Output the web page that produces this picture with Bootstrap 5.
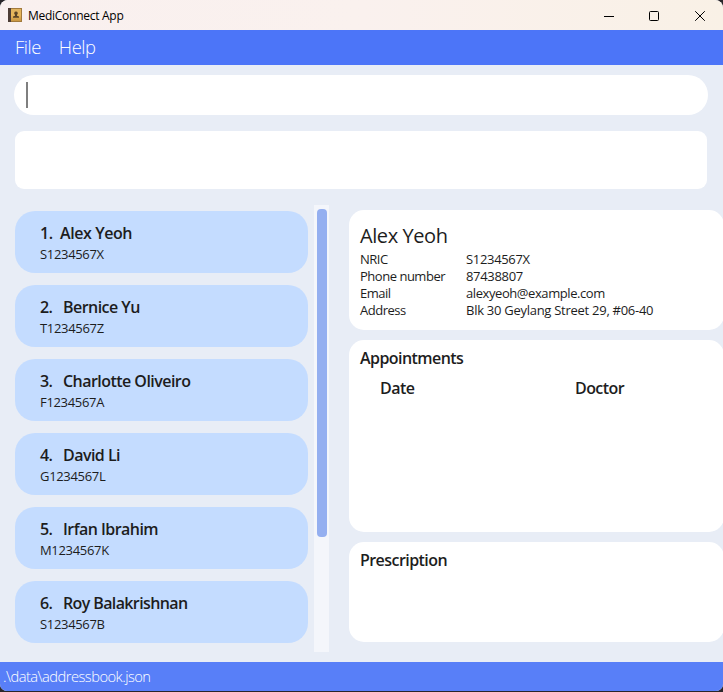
<!DOCTYPE html>
<html lang="en">
<head>
<meta charset="utf-8">
<meta name="viewport" content="width=device-width, initial-scale=1">
<title>MediConnect App</title>
<link href="https://cdn.jsdelivr.net/npm/bootstrap@5.3.0/dist/css/bootstrap.min.css" rel="stylesheet">
<style>
html,body{height:100%;overflow:hidden}
body{background:#29262a;font-family:"Open Sans","Noto Sans",sans-serif;color:#1d1d1d;font-size:13px;line-height:17px}
.window{height:691px;background:#e8edf6;border-radius:8px 8px 7px 7px}
.title-bar{height:30px;background:linear-gradient(90deg,#f9f0ef,#faf1ee 50%,#f9f1e6);color:#000;font-size:12px;padding-left:8px}
.title-text{margin-left:6px;letter-spacing:-.27px}
.win-btn{width:46px}
.win-btn:first-child{width:44px}
.menu-bar{height:35px;background:#4c75f8;color:#fff;font-weight:300;font-size:18.4px;padding:0 0 2px 15px;gap:18px}
.menu-bar span{letter-spacing:-.45px}
.command-box{height:40px;margin:10px 15px 0 14px;border-radius:20px;padding-left:12px}
.caret{width:2px;height:26px;background:#7f7f7f}
.result-box{height:58px;margin:16px 16px 0 15px;border-radius:9px}
.main-area{height:473px;padding-top:16px}
.person-list{width:314px;padding:6px 6px 0 15px;gap:12px}
.person{height:62px;flex:none;background:#c4dcff;border-radius:20px;padding:11px 0 0 25px}
.person-name{font-size:16px;line-height:22px;font-weight:600;letter-spacing:-.54px}
.person-name .num{width:23px}
.person:first-child .num{width:20px}
.person:first-child .person-name{letter-spacing:-.42px}
.person:last-child .person-name{letter-spacing:-.62px}
.person-id{margin-top:2px;letter-spacing:-.32px}
.track{width:15px;height:447px;background:#f4f6fb;padding:4px 2px 0 3px}
.thumb{height:328px;background:#94aff0;border-radius:4px}
.details{width:375px;margin-left:20px;padding-top:5px;gap:10px}
.panel{background:#fff;border-radius:15px;padding:0 11px}
.panel-person{height:120px;padding-top:11px}
.panel-appt{height:192px;padding-top:7px}
.panel-rx{height:100px;padding-top:7px}
.full-name{font-size:20px;line-height:29px;margin-bottom:1px;letter-spacing:-.42px}
.fields{display:grid;grid-template-columns:106px 1fr}
.fields span:nth-child(odd){letter-spacing:-.48px}
.fields span:nth-child(even){letter-spacing:-.32px}
.fields .field-email{letter-spacing:-.42px!important}
.fields .field-address{letter-spacing:-.27px!important}
.heading{font-size:16px;line-height:22px;font-weight:600;letter-spacing:-.56px}
.appt-head{display:grid;grid-template-columns:195px 1fr;padding-left:20px;margin-top:8px}
.status-bar{height:29px;background:#587ff8;color:#fff;font-weight:300;font-size:14.7px;letter-spacing:-.52px;padding-left:3px}
</style>
</head>
<body>
<div class="window d-flex flex-column overflow-hidden">
  <header class="title-bar d-flex align-items-center flex-shrink-0">
    <svg width="14" height="14" viewBox="0 0 14 14"><defs><linearGradient id="g" x2="0" y2="1"><stop stop-color="#dfb25e"/><stop offset=".5" stop-color="#e9b85c"/><stop offset="1" stop-color="#c99743"/></linearGradient></defs><path fill="#a27a3c" d="M0 0h14v14H0z"/><path fill="#4d3d36" d="M0 0h3v14H0z"/><path fill="url(#g)" d="M3 1h10v12H3z"/><path fill="#5a4326" d="M8 3.4a1.8 1.8 0 0 1 1 3.300v1.100l2 .8v1.200H5V8.600l2-.8V6.700a1.800 1.800 0 0 1 1-3.300z"/></svg>
    <span class="title-text">MediConnect App</span>
    <div class="d-flex ms-auto">
      <span class="win-btn text-center"><svg width="10" height="10" viewBox="0 0 10 10"><path d="M0 5.500h10" stroke="#000"/></svg></span>
      <span class="win-btn text-center"><svg width="10" height="10" viewBox="0 0 10 10"><rect x=".5" y=".5" width="9" height="9" rx="1" fill="none" stroke="#000"/></svg></span>
      <span class="win-btn text-center"><svg width="10" height="10" viewBox="0 0 10 10"><path d="M.2.2l9.600 9.600M9.800.2L.2 9.800" stroke="#000"/></svg></span>
    </div>
  </header>
  <nav class="menu-bar d-flex align-items-center flex-shrink-0"><span>File</span><span>Help</span></nav>
  <div class="command-box bg-white d-flex align-items-center flex-shrink-0"><div class="caret"></div></div>
  <div class="result-box bg-white flex-shrink-0"></div>
  <main class="main-area d-flex align-items-start flex-shrink-0">
    <div class="person-list d-flex flex-column flex-shrink-0">
      <div class="person"><div class="person-name d-flex"><span class="num">1.</span><span>Alex Yeoh</span></div><div class="person-id">S1234567X</div></div>
      <div class="person"><div class="person-name d-flex"><span class="num">2.</span><span>Bernice Yu</span></div><div class="person-id">T1234567Z</div></div>
      <div class="person"><div class="person-name d-flex"><span class="num">3.</span><span>Charlotte Oliveiro</span></div><div class="person-id">F1234567A</div></div>
      <div class="person"><div class="person-name d-flex"><span class="num">4.</span><span>David Li</span></div><div class="person-id">G1234567L</div></div>
      <div class="person"><div class="person-name d-flex"><span class="num">5.</span><span>Irfan Ibrahim</span></div><div class="person-id">M1234567K</div></div>
      <div class="person"><div class="person-name d-flex"><span class="num">6.</span><span>Roy Balakrishnan</span></div><div class="person-id">S1234567B</div></div>
    </div>
    <div class="track flex-shrink-0"><div class="thumb"></div></div>
    <div class="details d-flex flex-column flex-shrink-0">
      <section class="panel panel-person">
        <div class="full-name">Alex Yeoh</div>
        <div class="fields"><span>NRIC</span><span>S1234567X</span><span>Phone number</span><span>87438807</span><span>Email</span><span class="field-email">alexyeoh@example.com</span><span>Address</span><span class="field-address">Blk 30 Geylang Street 29, #06-40</span></div>
      </section>
      <section class="panel panel-appt">
        <div class="heading">Appointments</div>
        <div class="heading appt-head"><span>Date</span><span>Doctor</span></div>
      </section>
      <section class="panel panel-rx"><div class="heading">Prescription</div></section>
    </div>
  </main>
  <footer class="status-bar d-flex align-items-center flex-shrink-0">.\data\addressbook.json</footer>
</div>
<script src="https://cdn.jsdelivr.net/npm/bootstrap@5.3.0/dist/js/bootstrap.bundle.min.js"></script>
</body>
</html>
